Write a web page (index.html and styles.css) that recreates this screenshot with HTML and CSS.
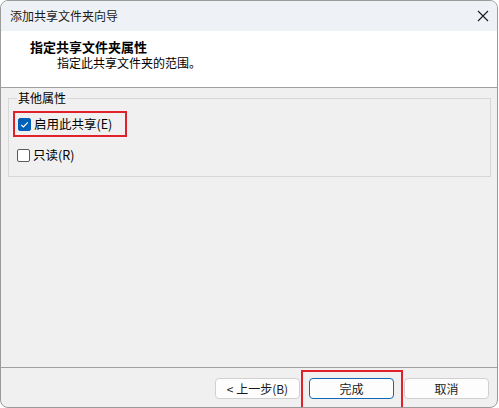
FILE: index.html
```html
<!DOCTYPE html>
<html lang="zh-CN">
<head>
<meta charset="utf-8">
<link rel="stylesheet" href="styles.css">
</head>
<body>
<div class="window">
  <div class="titlebar">
    <span class="title">添加共享文件夹向导</span>
    <svg class="close" width="12" height="12" viewBox="0 0 12 12"><path d="M1 1 L11 11 M11 1 L1 11" stroke="#1a1a1a" stroke-width="1.1" fill="none"/></svg>
  </div>
  <div class="header">
    <div class="h-title">指定共享文件夹属性</div>
    <div class="h-sub">指定此共享文件夹的范围。</div>
  </div>
  <div class="content">
    <fieldset class="group">
      <legend>其他属性</legend>
      <div class="row highlight">
        <span class="cb checked"><svg width="13" height="13" viewBox="0 0 13 13"><path d="M3.2 6.8 L5.4 9 L9.8 4.4" stroke="#fff" stroke-width="1.2" fill="none"/></svg></span>
        <span class="label">启用此共享(E)</span>
      </div>
      <div class="row second">
        <span class="cb"></span>
        <span class="label">只读(R)</span>
      </div>
    </fieldset>
  </div>
  <div class="footer">
    <button class="btn">&lt; 上一步(B)</button>
    <span class="finish-wrap"><button class="btn primary">完成</button></span>
    <button class="btn">取消</button>
  </div>
</div>
</body>
</html>
```
FILE: styles.css
```css
* { box-sizing: border-box; }
html, body { margin: 0; padding: 0; background: #ffffff; }
body {
  width: 499px; height: 408px;
  font-family: "Noto Sans CJK SC", "Noto Sans", sans-serif;
  font-size: 12px; color: #000;
}
.window {
  width: 498px; height: 408px;
  border: 1px solid #9a9a9a;
  border-radius: 8px;
  background: #f0f0f0;
  overflow: hidden;
  display: flex; flex-direction: column;
}
.titlebar {
  height: 30px; flex: none;
  background: #eef2f7;
  display: flex; align-items: center; justify-content: space-between;
  padding: 0 8px 0 9px;
}
.title { font-size: 12px; line-height: 14px; color: #1a1a1a; }
.close { margin-right: 0; }
.header {
  height: 57px; flex: none;
  background: #ffffff;
  border-bottom: 1px solid #a0a0a0;
  padding: 8px 0 0 29px;
}
.h-title { font-size: 13px; font-weight: bold; line-height: 16px; }
.h-sub { font-size: 12px; line-height: 16px; padding-left: 27px; margin-top: 0; }
.content { flex: 1; padding: 3px 6px 0 7px; }
.group {
  margin: 0; padding: 0 0 0 8px;
  height: 86px;
  border: 1px solid #d8d8d8;
  border-radius: 0;
}
.group legend {
  padding: 0 1px; margin-left: 0;
  font-size: 12px; line-height: 14px;
}
.row { display: flex; align-items: center; height: 26px; }
.highlight {
  margin-left: -4px; padding-left: 3px;
  width: 114px; margin-top: 6px;
  border: 2px solid #e0202b;
}
.second { margin-top: 10px; height: 16px; }
.cb {
  width: 13px; height: 13px; flex: none;
  border: 1px solid #5a5a5a; border-radius: 2px;
  background: #fff;
  display: flex;
}
.cb.checked { background: #005fb8; border-color: #005fb8; }
.cb.checked svg { margin: -1px; }
.label { margin-left: 3px; line-height: 14px; font-size: 12.5px; }
.footer {
  height: 40px; flex: none;
  border-top: 1px solid #a0a0a0;
  display: flex; align-items: flex-start; justify-content: flex-end;
  padding: 2px 8px 0 0;
}
.btn {
  width: 85px; height: 21px;
  margin-top: 8px;
  font-family: "Noto Sans CJK SC", "Noto Sans", sans-serif;
  font-size: 12px; line-height: 14px;
  background: #fdfdfd;
  border: 1px solid #d0d0d0;
  border-radius: 4px;
  padding: 0; color: #1a1a1a;
}
.finish-wrap {
  border: 2px solid #e0202b;
  border-bottom: none;
  height: 40px; padding: 6px 7px 0 6px;
  margin: 0 1px 0 1px;
}
.finish-wrap .btn { margin-top: 0; }
.btn.primary { border-color: #1565b5; }
```
